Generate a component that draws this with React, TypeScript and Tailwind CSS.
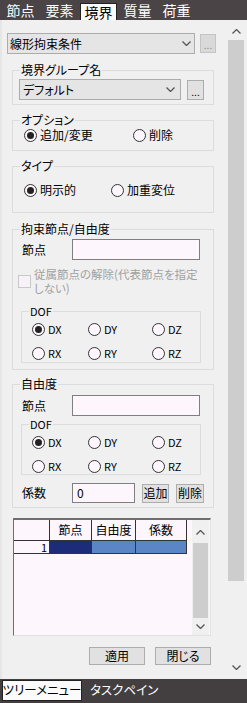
import React from "react";

const Chevron = ({ up = false }: { up?: boolean }) => (
  <svg width="9" height="5" viewBox="0 0 9 5" className="block">
    <polyline
      points={up ? "0.5,4.5 4.5,0.5 8.5,4.5" : "0.5,0.5 4.5,4.5 8.5,0.5"}
      fill="none"
      stroke="#555"
      strokeWidth="1.3"
    />
  </svg>
);

const Radio = ({ checked = false, label }: { checked?: boolean; label: string }) => (
  <div className="flex items-center h-[16px]">
    <span className="w-[13px] h-[13px] rounded-full border border-[#333] bg-[#fdf7fd] flex items-center justify-center shrink-0">
      {checked && <span className="w-[7px] h-[7px] rounded-full bg-[#222]" />}
    </span>
    <span className="ml-[3px] leading-[16px]">{label}</span>
  </div>
);

const Group = ({
  label,
  className,
  labelClass,
  children,
}: {
  label: string;
  className: string;
  labelClass?: string;
  children: React.ReactNode;
}) => (
  <div className={`border border-[#dcdcdc] ${className}`}>
    <div className={`-mt-[8px] w-fit bg-[#f0f0f0] px-[1px] h-[14px] leading-[14px] ${labelClass ?? "ml-[7px]"}`}>
      {label}
    </div>
    {children}
  </div>
);

const Dof = ({ className }: { className: string }) => (
  <Group label="DOF" className={className} labelClass="ml-[7px] text-[11px]">
    {[
      ["DX", "DY", "DZ"],
      ["RX", "RY", "RZ"],
    ].map((row, i) => (
      <div key={i} className={`flex ml-[10px] text-[11px] ${i === 0 ? "mt-[3px]" : "mt-[8px]"}`}>
        <div className="w-[56px]">
          <Radio checked={row[0] === "DX"} label={row[0]} />
        </div>
        <div className="w-[64px]">
          <Radio label={row[1]} />
        </div>
        <div>
          <Radio label={row[2]} />
        </div>
      </div>
    ))}
  </Group>
);

const Btn = ({ label, className }: { label: string; className: string }) => (
  <div
    className={`bg-[#e1e1e1] border border-[#adadad] flex items-center justify-center leading-none ${className}`}
  >
    {label}
  </div>
);

const Input = ({ className, value }: { className: string; value?: string }) => (
  <div className={`bg-[#fdf7fd] border border-[#7f7f7f] flex items-center pl-[4px] ${className}`}>
    {value}
  </div>
);

export default function App() {
  return (
    <div className="w-[247px] h-[703px] flex flex-col bg-[#f0f0f0] text-[12px] text-black font-['Noto_Sans_CJK_JP','Noto_Sans',sans-serif] [font-feature-settings:'palt'] overflow-hidden">
      {/* top tabs */}
      <div className="h-[20px] bg-[#4a4446] flex items-end text-[14px] text-white shrink-0">
        <div className="w-[39px] h-[20px] flex items-center justify-center ml-[1px]">節点</div>
        <div className="w-[39px] h-[20px] flex items-center justify-center">要素</div>
        <div className="w-[37px] h-[17px] mx-[1px] bg-[#fbfbfb] border border-b-0 border-[#222] text-black flex items-center justify-center">
          境界
        </div>
        <div className="w-[39px] h-[20px] flex items-center justify-center">質量</div>
        <div className="w-[39px] h-[20px] flex items-center justify-center">荷重</div>
      </div>

      {/* main panel */}
      <div className="h-[659px] flex shrink-0">
        <div className="w-[228px] border-l-2 border-[#e6e6e6]">
          {/* 線形拘束条件 */}
          <div className="flex items-center mt-[13px] ml-[5px]">
            <div className="w-[188px] h-[21px] bg-[#e5e5e5] border border-[#acacac] flex items-center justify-between pl-[2px] pr-[3px]">
              <span>線形拘束条件</span>
              <Chevron />
            </div>
            <div className="ml-[5px] w-[16px] h-[19px] bg-[#d9d9d9] border border-[#c4c4c4] text-[#8c8c8c] flex items-end justify-center leading-[14px] text-[10px]">
              ...
            </div>
          </div>

          {/* 境界グループ名 */}
          <Group label="境界グループ名" className="ml-[10px] w-[202px] mt-[16px] pb-[4px]">
            <div className="flex items-end mt-[2px] ml-[6px]">
              <div className="w-[162px] h-[21px] bg-[#e5e5e5] border border-[#acacac] flex items-center justify-between pl-[3px] pr-[5px]">
                <span>デフォルト</span>
                <Chevron />
              </div>
              <div className="ml-[6px] w-[17px] h-[20px] bg-[#e1e1e1] border border-[#adadad] flex items-end justify-center leading-[14px] text-[10px]">
                ...
              </div>
            </div>
          </Group>

          {/* オプション */}
          <Group label="オプション" className="ml-[10px] w-[202px] mt-[15px] pb-[7px]">
            <div className="flex mt-[0px] ml-[11px]">
              <div className="w-[109px]">
                <Radio checked label="追加/変更" />
              </div>
              <Radio label="削除" />
            </div>
          </Group>

          {/* タイプ */}
          <Group label="タイプ" className="ml-[10px] w-[202px] mt-[15px] pb-[14px]">
            <div className="flex mt-[9px] ml-[11px]">
              <div className="w-[87px]">
                <Radio checked label="明示的" />
              </div>
              <Radio label="加重変位" />
            </div>
          </Group>

          {/* 拘束節点/自由度 */}
          <Group label="拘束節点/自由度" className="ml-[10px] w-[202px] mt-[16px] pb-[6px]">
            <div className="flex items-center mt-[3px]">
              <span className="ml-[9px] w-[50px]">節点</span>
              <Input className="w-[128px] h-[21px]" />
            </div>
            <div className="flex items-center mt-[7px] ml-[5px]">
              <span className="w-[13px] h-[13px] border border-[#c8c8c8] bg-[#f7f2f7] shrink-0" />
              <div className="ml-[3px] text-[#a0a0a0] text-[11.5px]">
                <div className="h-[14px] leading-[14px]">従属節点の解除(代表節点を指定</div>
                <div className="h-[14px] leading-[14px]">しない)</div>
              </div>
            </div>
            <Dof className="ml-[8px] w-[180px] mt-[16px] pb-[1px]" />
          </Group>

          {/* 自由度 */}
          <Group label="自由度" className="ml-[10px] w-[202px] mt-[14px] pb-[4px]">
            <div className="flex items-center mt-[4px]">
              <span className="ml-[9px] w-[50px]">節点</span>
              <Input className="w-[128px] h-[21px]" />
            </div>
            <Dof className="ml-[8px] w-[180px] mt-[8px] pb-[0px]" />
            <div className="flex items-center mt-[8px]">
              <span className="ml-[9px] w-[50px]">係数</span>
              <Input className="w-[63px] h-[20px]" value="0" />
              <Btn label="追加" className="ml-[7px] w-[27px] h-[19px]" />
              <Btn label="削除" className="ml-[7px] w-[28px] h-[19px]" />
            </div>
          </Group>

          {/* grid */}
          <div className="ml-[11px] mt-[10px] w-[198px] h-[118px] bg-[#fdf7fd] border-t-2 border-l border-[#6e6e6e] border-b border-b-[#e2e2e2] border-r border-r-[#e2e2e2] flex">
            <div className="flex-1">
              <div className="flex h-[21px] border-b border-[#333] w-fit">
                <div className="w-[36px] border-r border-[#333] bg-[#fdf7fd]" />
                <div className="w-[42px] border-r border-[#333] flex items-center justify-center">節点</div>
                <div className="w-[44px] border-r border-[#333] flex items-center justify-center">自由度</div>
                <div className="w-[51px] border-r border-[#333] flex items-center justify-center">係数</div>
              </div>
              <div className="flex h-[13px] border-b border-[#333] w-fit">
                <div className="w-[36px] border-r border-[#333] flex items-center justify-end pr-[2px] text-[11px] leading-none">
                  1
                </div>
                <div className="w-[42px] border-r border-[#333] bg-[#1d2c78]" />
                <div className="w-[44px] border-r border-[#333] bg-[#5a86c5]" />
                <div className="w-[51px] border-r border-[#333] bg-[#5a86c5]" />
              </div>
            </div>
            <div className="w-[17px] flex flex-col bg-[#f0f0f0] mr-[1px]">
              <div className="h-[23px] flex items-center justify-center pt-[2px]">
                <Chevron up />
              </div>
              <div className="h-[75px] mx-[1px] bg-[#cdcdcd]" />
              <div className="flex-1 flex items-end justify-center pb-[6px]">
                <Chevron />
              </div>
            </div>
          </div>

          {/* buttons */}
          <div className="flex mt-[11px] ml-[87px]">
            <Btn label="適用" className="w-[56px] h-[18px]" />
            <Btn label="閉じる" className="ml-[10px] w-[56px] h-[18px]" />
          </div>
        </div>

        {/* main scrollbar */}
        <div className="w-[16px] flex flex-col">
          <div className="h-[20px] flex items-center justify-center pt-[2px]">
            <Chevron up />
          </div>
          <div className="h-[541px] bg-[#cdcdcd]" />
          <div className="flex-1 flex items-end justify-center pb-[9px]">
            <Chevron />
          </div>
        </div>
      </div>

      {/* bottom tabs */}
      <div className="flex-1 bg-[#433e3f] flex items-start pt-[1px] text-[12.5px] whitespace-nowrap">
        <div className="ml-[2px] w-[80px] h-[21px] bg-[#fbfbfb] border border-[#222] flex items-center justify-center">
          ツリーメニュー
        </div>
        <div className="ml-[8px] h-[21px] flex items-center text-white">タスクペイン</div>
      </div>
    </div>
  );
}
